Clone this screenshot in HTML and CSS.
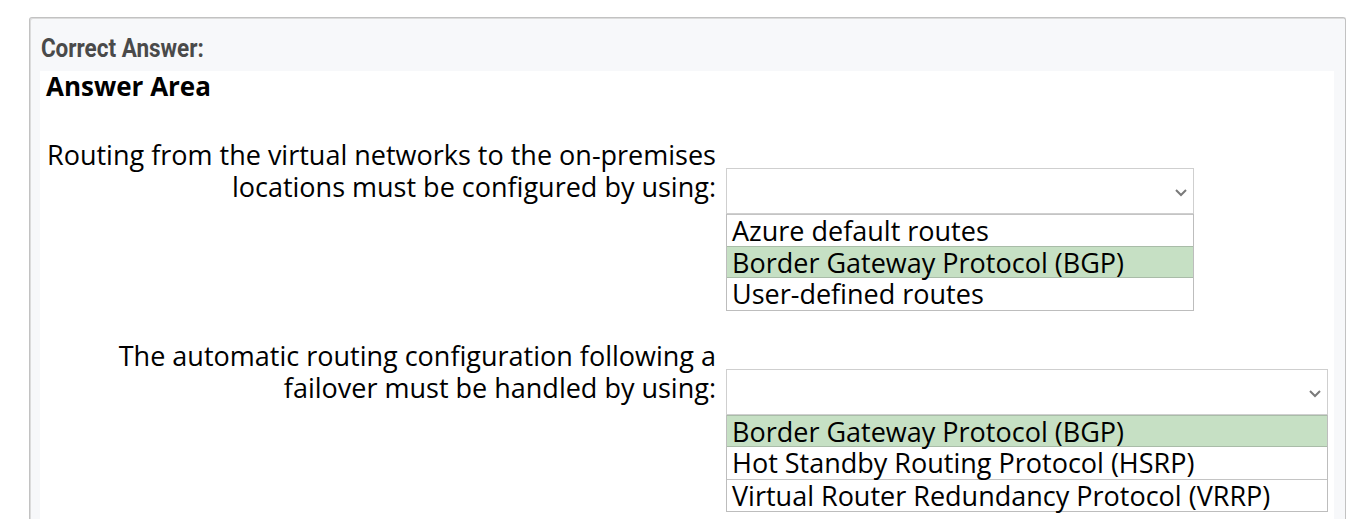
FILE: index.html
```html
<!DOCTYPE html>
<html>
<head>
<meta charset="utf-8">
<link rel="stylesheet" href="styles.css">
</head>
<body>
<div class="card">
  <div class="card-title">Correct Answer:</div>
  <div class="panel">
    <div class="area-title">Answer Area</div>
    <div class="question q1">
      <div class="label"><div class="line">Routing from the virtual networks to the on-premises</div><div class="line">locations must be configured by using:</div></div>
      <div class="dropdown narrow">
        <div class="select"><svg class="chev" width="12" height="8" viewBox="0 0 12 8"><polyline points="1,1 6,6 11,1" fill="none" stroke="#7a7a7a" stroke-width="2"/></svg></div>
        <div class="list">
          <div class="item">Azure default routes</div>
          <div class="item selected">Border Gateway Protocol (BGP)</div>
          <div class="item">User-defined routes</div>
        </div>
      </div>
    </div>
    <div class="question q2">
      <div class="label"><div class="line">The automatic routing configuration following a</div><div class="line">failover must be handled by using:</div></div>
      <div class="dropdown wide">
        <div class="select"><svg class="chev" width="12" height="8" viewBox="0 0 12 8"><polyline points="1,1 6,6 11,1" fill="none" stroke="#7a7a7a" stroke-width="2"/></svg></div>
        <div class="list">
          <div class="item selected">Border Gateway Protocol (BGP)</div>
          <div class="item">Hot Standby Routing Protocol (HSRP)</div>
          <div class="item">Virtual Router Redundancy Protocol (VRRP)</div>
        </div>
      </div>
    </div>
  </div>
</div>
</body>
</html>
```

FILE: styles.css
```css
html, body {
  margin: 0;
  padding: 0;
  background: #ffffff;
}
body {
  padding: 17px 11px 0 29px;
  height: 519px;
  overflow: hidden;
  box-sizing: border-box;
}
.card {
  background: #f7f8fa;
  border: 1px solid #c2c2c2;
  border-bottom: none;
  border-radius: 3px 3px 0 0;
  box-shadow: inset 1px 1px 0 #dcdcdc;
  padding: 0 11px 40px 10px;
  height: 520px;
  box-sizing: border-box;
}
.card-title {
  font-family: Roboto, "Liberation Sans", sans-serif;
  font-weight: 700;
  font-size: 25px;
  color: #4a4a4a;
  transform: scaleX(0.9);
  transform-origin: left center;
  padding: 18px 0 0 1px;
  height: 35px;
  line-height: 26px;
}
.panel {
  background: #ffffff;
  padding: 0 0 0 6px;
  height: 460px;
  font-family: "Open Sans", "Noto Sans", sans-serif;
  color: #000;
}
.area-title {
  font-weight: 700;
  font-size: 26px;
  line-height: 30px;
  padding-top: 0;
}
.question {
  display: flex;
  align-items: flex-start;
  gap: 10px;
}
.q1 { margin-top: 38px; }
.q2 { margin-top: 29px; }
.label {
  width: 670px;
  text-align: right;
  font-size: 27px;
  white-space: nowrap;
}
.line {
  height: 32px;
  line-height: 32px;
}
.dropdown {
  margin-top: 29px;
}
.narrow { width: 468px; }
.wide { width: 602px; }
.select {
  height: 44px;
  border: 1px solid #cfcfcf;
  display: flex;
  align-items: center;
  justify-content: flex-end;
  padding-right: 6px;
}
.chev { margin-top: 4px; }
.list {
  border: 1px solid #bdbdbd;
  border-top: none;
}
.item {
  height: 31px;
  line-height: 31px;
  font-size: 27px;
  padding-left: 5px;
  border-top: 1px solid #c4c4c4;
  white-space: nowrap;
}
.item.selected {
  background: #c6e0c4;
  border-top: 1px solid #a9bca8;
  border-bottom: 1px solid #a9bca8;
  height: 30px;
}
.item.selected + .item {
  border-top: none;
  height: 32px;
}
```
